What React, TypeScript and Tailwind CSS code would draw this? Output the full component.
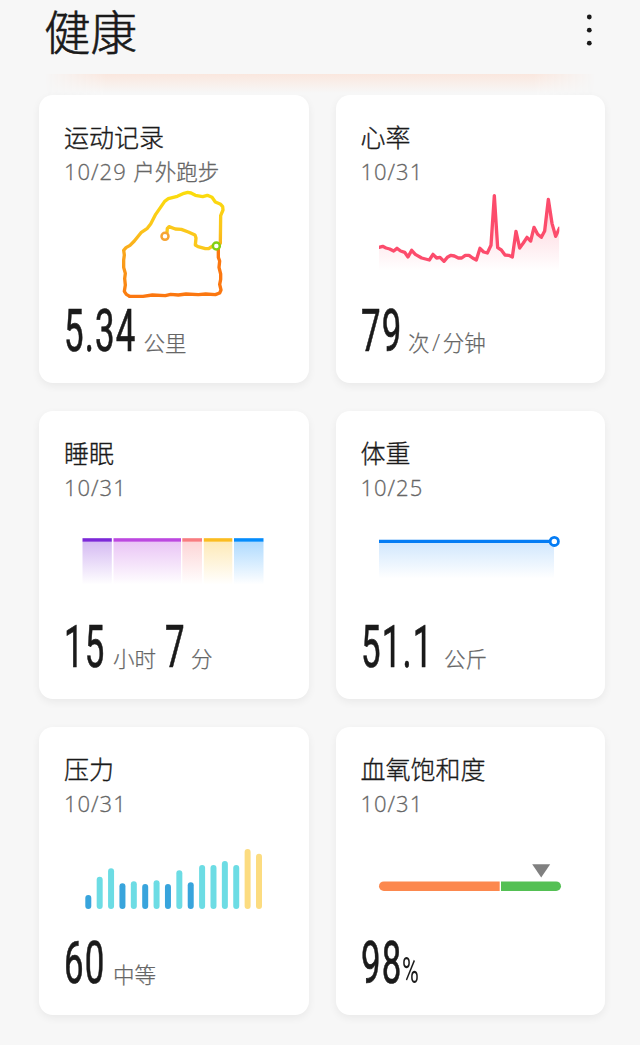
import React from 'react';

interface CardProps {
    title: string;
    date: string;
    activity?: string;
    chart: React.ReactNode;
    children: React.ReactNode;
}

const Card = ({ title, date, activity, chart, children }: CardProps) => (
    <section className="h-[287.5px] w-[269.5px] flex flex-col rounded-[14px] bg-white">
        <div className="h-[95px] pl-[25px] pt-[23px] whitespace-nowrap">
            <h2 className="text-[25px] leading-[36px] font-light text-[#1a1a1a] [-webkit-text-stroke:0.35px_#1a1a1a]">{title}</h2>
            <p className="flex items-baseline text-[21.5px] leading-[33px] font-light text-[#666] [-webkit-text-stroke:0.3px_#666]">
                <span className="font-['Open_Sans',sans-serif] text-[22px] leading-[35px] tracking-[1px]">{date}</span>
                {activity && <span className="ml-[6.5px]">{activity}</span>}
            </p>
        </div>
        <svg width="269" height="112" viewBox="0 0 269 112" fill="none" className="shrink-0">
            {chart}
        </svg>
        <div className="flex items-baseline pl-[25px] h-[70px] -mt-[1px] whitespace-nowrap">{children}</div>
    </section>
);

const Num = ({ value, width }: { value: string; width: string }) => (
    <span className={`${width} inline-block shrink-0`}>
        <span className="inline-block origin-left scale-x-[0.59] font-['Roboto',sans-serif] text-[59px] leading-[60px] tracking-[2px] text-[#1a1a1a] [-webkit-text-stroke:0.7px_#1a1a1a]">
            {value}
        </span>
    </span>
);

const Unit = ({ text, width = '' }: { text: string; width?: string }) => (
    <span className={`${width} shrink-0 text-[21.5px] leading-[30px] font-light text-[#666] [-webkit-text-stroke:0.25px_#666]`}>{text}</span>
);

const RouteChart = () => (
    <g transform="translate(71 -10) scale(0.33333)" strokeLinecap="round" strokeLinejoin="round">
        <defs>
            <linearGradient id="routeLeft" gradientUnits="userSpaceOnUse" x1="0" y1="40" x2="0" y2="350">
                <stop offset="0" stopColor="#fbdc0c" />
                <stop offset="0.35" stopColor="#fbc41c" />
                <stop offset="0.6" stopColor="#f9a31c" />
                <stop offset="1" stopColor="#fb7c10" />
            </linearGradient>
        </defs>
        <path
            stroke="url(#routeLeft)"
            strokeWidth="10"
            d="M59 349 L49 343 L43 334 L46 315 L44 296 L46 280 L41 262 L41 240 L43 225 L41 211 L48 203 L60 196 L73 183 L93 158 L112 145 L122 132 L137 103 L164 64 L175 56 L202 49 L222 40 L233 37 L243 39 L256 46 L278 50 L292 46 L306 52 L316 66 L332 73 L338 80 L339 90 L332 107 L331 190"
        />
        <path stroke="#fbc81c" strokeWidth="10" d="M171 158 L172 145 L177 140 L196 147 L214 148 L235 156 L255 165 L258 174 L256 195 L264 200 L286 206 L296 206 L306 199 L316 197" />
        <path stroke="#fb7710" strokeWidth="10" d="M325 204 L325 232 L329 243 L327 262 L332 282 L332 298 L329 313 L333 330 L329 339 L316 344 L287 342 L265 344 L228 342 L205 345 L182 343 L166 347 L127 345 L99 349 L59 349" />
        <circle cx="165" cy="169" r="10.5" fill="#fff" stroke="#f6a434" strokeWidth="7.5" />
        <circle cx="319" cy="198" r="10.5" fill="#fff" stroke="#84d010" strokeWidth="7.5" />
    </g>
);

const HEART = '117,412 128,409 138,414 149,417 161,423 171,415 182,423 194,427 204,441 215,421 226,433 245,444 268,450 279,433 290,444 300,442 312,454 322,442 333,436 343,438 355,444 365,444 376,436 387,436 398,444 409,450 420,415 431,426 442,429 453,406 463,257 473,413 484,420 495,435 506,436 517,441 528,364 539,414 550,399 561,382 572,393 582,352 593,373 604,382 614,363 625,268 636,340 647,379 658,355';

const HeartChart = () => (
    <g transform="translate(4 -80) scale(0.33333)">
        <defs>
            <linearGradient id="heartFill" gradientUnits="userSpaceOnUse" x1="0" y1="260" x2="0" y2="482">
                <stop offset="0" stopColor="#fc4c6c" stopOpacity="0.3" />
                <stop offset="1" stopColor="#fc4c6c" stopOpacity="0" />
            </linearGradient>
            <clipPath id="heartClip">
                <rect x="117" y="240" width="541" height="250" />
            </clipPath>
        </defs>
        <g clipPath="url(#heartClip)">
            <polygon points={`117,482 ${HEART} 658,482`} fill="url(#heartFill)" />
            <polyline points={HEART} stroke="#fc4c6c" strokeWidth="10" strokeLinejoin="round" strokeLinecap="round" />
        </g>
    </g>
);

const STAGES = [
    { x: 43.5, w: 29.3, color: '#7c28d8' },
    { x: 74.5, w: 67.5, color: '#bc48e0' },
    { x: 143.3, w: 19.7, color: '#f87c80' },
    { x: 164.8, w: 28.5, color: '#fbbc20' },
    { x: 195, w: 29.5, color: '#048cfc' },
];

const SleepChart = () => (
    <>
        {STAGES.map((s, i) => (
            <g key={i}>
                <linearGradient id={`stage${i}`} x1="0" y1="0" x2="0" y2="1">
                    <stop offset="0" stopColor={s.color} stopOpacity="0.32" />
                    <stop offset="1" stopColor={s.color} stopOpacity="0" />
                </linearGradient>
                <rect x={s.x} y="35.5" width={s.w} height="43" fill={`url(#stage${i})`} />
                <rect x={s.x} y="32.2" width={s.w} height="3.5" fill={s.color} />
            </g>
        ))}
    </>
);

const WeightChart = () => (
    <>
        <linearGradient id="weightFill" x1="0" y1="0" x2="0" y2="1">
            <stop offset="0" stopColor="#047cf4" stopOpacity="0.19" />
            <stop offset="1" stopColor="#047cf4" stopOpacity="0" />
        </linearGradient>
        <rect x="43" y="35" width="175" height="37.5" fill="url(#weightFill)" />
        <path d="M43 35.4H218" stroke="#047cf4" strokeWidth="3.4" />
        <circle cx="218.3" cy="35.4" r="4.1" fill="#fff" stroke="#047cf4" strokeWidth="2.8" />
    </>
);

// top edge and level of every half hour
const STRESS: [number, string][] = [
    [73, '#38a4dc'], [54.7, '#6cdce4'], [46.3, '#6cdce4'], [61.3, '#38a4dc'],
    [59.3, '#6cdce4'], [62, '#38a4dc'], [58.3, '#6cdce4'], [62, '#38a4dc'],
    [48.3, '#6cdce4'], [60.3, '#38a4dc'], [43, '#6cdce4'], [43, '#6cdce4'],
    [39, '#6cdce4'], [43, '#6cdce4'], [27, '#fcdc80'], [31.7, '#fcdc80'],
];

const StressChart = () => (
    <>
        {STRESS.map(([top, color], i) => (
            <rect key={i} x={46.3 + i * 11.38} y={top} width="6" height={87 - top} rx="3" fill={color} />
        ))}
    </>
);

const OxygenChart = () => (
    <>
        <path d="M196.2 42.2H214.2L205.2 55.4Z" fill="#808080" />
        <path d="M163.7 59.4H47.8a4.8 4.8 0 0 0 0 9.6H163.7Z" fill="#fc884e" />
        <path d="M165 59.4H220.2a4.8 4.8 0 0 1 0 9.6H165Z" fill="#54c054" />
    </>
);

export default function App() {
    return (
        <main className="h-[1045px] w-[640px] bg-[#f7f7f7] font-['Noto_Sans_CJK_SC',sans-serif]">
            <header className="h-[74px] flex justify-between pl-[44px] pr-[48px]">
                <h1 className="font-['Liberation_Sans','Noto_Sans_CJK_SC',sans-serif] text-[46.5px] leading-[69px] font-light text-[#1a1a1a] [-webkit-text-stroke:0.6px_#1a1a1a]">健康</h1>
                <svg width="6" height="60" viewBox="0 0 6 60" fill="#1a1a1a">
                    <circle cx="3.3" cy="17" r="2.4" />
                    <circle cx="3.3" cy="30.2" r="2.4" />
                    <circle cx="3.3" cy="43.2" r="2.4" />
                </svg>
            </header>
            <div className="h-[21px] px-[39px] overflow-hidden">
                <div className="h-[21px] bg-linear-to-b from-[#fae7de] to-[#f7f7f7] to-90% [mask-image:linear-gradient(to_right,transparent_1%,black_12%,black_88%,transparent_99%)]" />
            </div>
            <div className="grid grid-cols-[269.5px_269.5px] gap-x-[27px] gap-y-[28.5px] pl-[39px] [&>section]:shadow-[0_3px_8px_rgba(0,0,0,0.06)]">
                <Card title="运动记录" date="10/29" activity="户外跑步" chart={<RouteChart />}>
                    <Num value="5.34" width="w-[79.5px]" />
                    <Unit text="公里" />
                </Card>
                <Card title="心率" date="10/31" chart={<HeartChart />}>
                    <Num value="79" width="w-[47.5px]" />
                    <Unit text="次" />
                    <span className="px-[2.5px] font-['Open_Sans',sans-serif] text-[24px] leading-[30px] font-light text-[#666]">/</span>
                    <Unit text="分钟" />
                </Card>
                <Card title="睡眠" date="10/31" chart={<SleepChart />}>
                    <Num value="15" width="w-[49px]" />
                    <Unit text="小时" width="w-[52px]" />
                    <Num value="7" width="w-[26px]" />
                    <Unit text="分" />
                </Card>
                <Card title="体重" date="10/25" chart={<WeightChart />}>
                    <Num value="51.1" width="w-[83.5px]" />
                    <Unit text="公斤" />
                </Card>
                <Card title="压力" date="10/31" chart={<StressChart />}>
                    <Num value="60" width="w-[49px]" />
                    <Unit text="中等" />
                </Card>
                <Card title="血氧饱和度" date="10/31" chart={<OxygenChart />}>
                    <Num value="98" width="w-[41px]" />
                    <span className="inline-block origin-left scale-x-[0.62] font-['Roboto',sans-serif] text-[37px] leading-[40px] text-[#1a1a1a]">%</span>
                </Card>
            </div>
        </main>
    );
}
